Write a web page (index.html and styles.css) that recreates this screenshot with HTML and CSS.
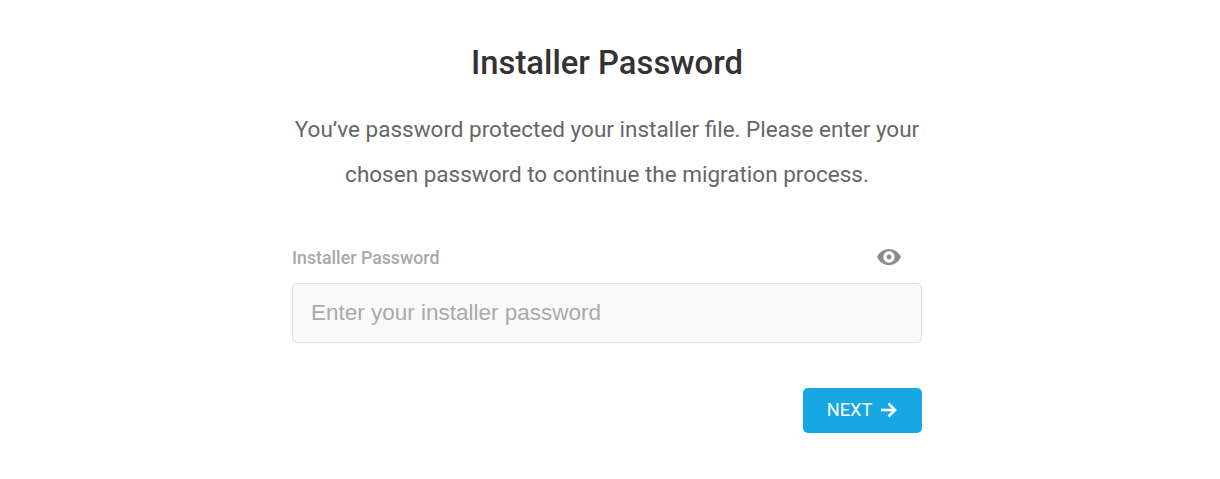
FILE: index.html
```html
<!DOCTYPE html>
<html lang="en">
<head>
  <meta charset="UTF-8">
  <title>Installer Password</title>
  <link rel="stylesheet" href="styles.css">
</head>
<body>
  <div class="password-step">
    <h1 class="step-title">Installer Password</h1>
    <p class="step-text">You’ve password protected your installer file. Please enter your chosen password to continue the migration process.</p>

    <div class="field">
      <div class="field-head">
        <label class="field-label" for="installer-password">Installer Password</label>
        <span class="toggle-eye">
          <svg viewBox="0 0 24 24" width="26" height="26" fill="#8c8c8c"><path d="M12 4.500C7 4.500 2.730 7.610 1 12c1.730 4.390 6 7.500 11 7.500s9.270-3.110 11-7.500c-1.730-4.390-6-7.500-11-7.500zM12 17.200c-2.870 0-5.200-2.330-5.200-5.200s2.330-5.200 5.200-5.200 5.200 2.330 5.200 5.200-2.330 5.200-5.200 5.200zm0-7.400c-1.220 0-2.200 0.980-2.200 2.200s0.980 2.200 2.200 2.200 2.200-0.980 2.200-2.200-0.980-2.200-2.200-2.200z"/></svg>
        </span>
      </div>
      <input class="field-input" id="installer-password" type="password" placeholder="Enter your installer password">
    </div>

    <div class="actions">
      <button class="next-btn" type="button">
        <span>NEXT</span>
        <svg viewBox="0 0 18 18" width="18" height="18" fill="none" stroke="#ffffff" stroke-width="2.6"><path d="M1 9h14"/><path d="M8.500 2.500L15 9l-6.500 6.500"/></svg>
      </button>
    </div>
  </div>
</body>
</html>
```

FILE: styles.css
```css
* {
  margin: 0;
  padding: 0;
  box-sizing: border-box;
}

body {
  font-family: Roboto, sans-serif;
  background: #ffffff;
  padding-right: 6px;
}

.password-step {
  width: 630px;
  margin: 0 auto;
  padding-top: 41px;
}

.step-title {
  font-size: 32.800px;
  font-weight: 500;
  line-height: 44px;
  color: #333333;
  text-align: center;
}

.step-text {
  margin-top: 22px;
  padding: 0 2px;
  font-size: 22.500px;
  line-height: 45px;
  color: #666666;
  text-align: center;
}

.field {
  margin-top: 46px;
}

.field-head {
  display: flex;
  align-items: center;
  justify-content: space-between;
  height: 28px;
  padding-right: 20px;
}

.field-label {
  font-size: 17.800px;
  font-weight: 500;
  color: #a8a8a8;
}

.toggle-eye {
  display: flex;
}

.field-input {
  display: block;
  width: 100%;
  height: 60px;
  margin-top: 12px;
  padding: 0 18px;
  background: #f9f9f9;
  border: 1px solid #dddddd;
  border-radius: 5px;
  font-family: "Liberation Sans", Arial, sans-serif;
  font-size: 22.500px;
}

.field-input::placeholder {
  color: #aaaaaa;
  opacity: 1;
}

.actions {
  display: flex;
  justify-content: flex-end;
  margin-top: 45px;
}

.next-btn {
  display: flex;
  align-items: center;
  justify-content: center;
  gap: 8px;
  width: 119px;
  height: 45px;
  padding-bottom: 2px;
  background: #17a8e3;
  border: none;
  border-radius: 5px;
  color: #ffffff;
  font-family: Roboto, sans-serif;
  font-size: 18.200px;
}
```
